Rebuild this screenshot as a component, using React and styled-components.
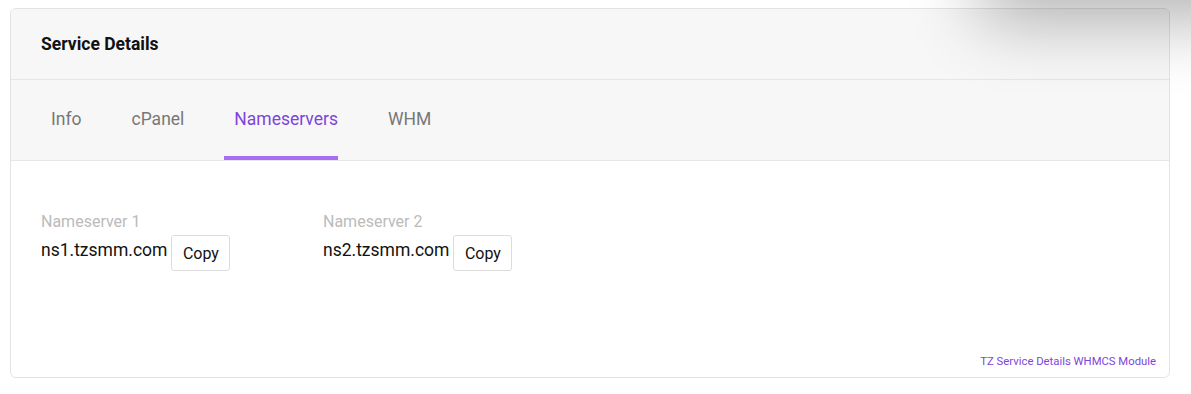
import React, { useState } from "react";
import styled, { createGlobalStyle } from "styled-components";

const GlobalStyle = createGlobalStyle`
  body {
    margin: 0;
    padding: 8px 0 0 10px;
    background: #fff;
    font-family: Roboto, "Liberation Sans", sans-serif;
    overflow: hidden;
  }
`;

const Card = styled.div`
  width: 1160px;
  box-sizing: border-box;
  border: 1px solid #e3e3e3;
  border-radius: 6px;
  background: #fff;
  overflow: hidden;
`;

const Header = styled.div`
  height: 70px;
  display: flex;
  align-items: center;
  padding-left: 30px;
  background: #f7f7f7;
  border-bottom: 1px solid #e6e6e6;
  font-size: 17.5px;
  font-weight: 700;
  color: #111;
`;

const TabBar = styled.div`
  height: 80px;
  display: flex;
  gap: 40px;
  padding-left: 30px;
  background: #f7f7f7;
  border-bottom: 1px solid #e6e6e6;
`;

const Tab = styled.button`
  position: relative;
  border: 0;
  background: none;
  padding: 0 0 2px 10px;
  font-family: inherit;
  font-size: 17.5px;
  color: ${(p) => (p.$active ? "#7e44dc" : "#777")};
  cursor: pointer;
  display: flex;
  align-items: center;

  &::after {
    content: "";
    position: absolute;
    left: 0;
    right: 0;
    bottom: 0;
    height: 4px;
    background: ${(p) => (p.$active ? "#a76ef2" : "transparent")};
  }
`;

const Body = styled.div`
  height: 216px;
  display: flex;
  flex-direction: column;
  padding: 51px 13px 9px 30px;
  box-sizing: border-box;
`;

const Servers = styled.div`
  display: grid;
  grid-template-columns: 282px 282px;
  flex: 1;
  align-content: start;
`;

const Field = styled.div`
  display: flex;
  flex-direction: column;
`;

const Label = styled.div`
  font-size: 16px;
  color: #bbb;
  line-height: 20px;
`;

const ValueRow = styled.div`
  display: flex;
  align-items: center;
  gap: 4px;
  margin-top: 3px;
`;

const Value = styled.span`
  font-size: 17.5px;
  color: #111;
  margin-top: -7px;
`;

const CopyButton = styled.button`
  height: 36px;
  width: 59px;
  padding: 0;
  border: 1px solid #dcdcdc;
  border-radius: 3px;
  background: #fff;
  font-family: inherit;
  font-size: 16px;
  color: #111;
  cursor: pointer;
`;

const Footer = styled.div`
  text-align: right;
  font-size: 11.3px;
  color: #7e44dc;
`;

const Shadow = styled.div`
  position: fixed;
  top: -70px;
  left: 1000px;
  width: 400px;
  height: 70px;
  background: #fff;
  box-shadow: 0 0 70px 20px rgba(0, 0, 0, 0.3);
  pointer-events: none;
`;

const tabs = ["Info", "cPanel", "Nameservers", "WHM"];
const servers = [
  { label: "Nameserver 1", value: "ns1.tzsmm.com" },
  { label: "Nameserver 2", value: "ns2.tzsmm.com" },
];

export default function App() {
  const [active, setActive] = useState("Nameservers");
  return (
    <>
      <GlobalStyle />
      <Card>
        <Header>Service Details</Header>
        <TabBar>
          {tabs.map((t) => (
            <Tab key={t} $active={t === active} onClick={() => setActive(t)}>
              {t}
            </Tab>
          ))}
        </TabBar>
        <Body>
          <Servers>
            {servers.map((s) => (
              <Field key={s.label}>
                <Label>{s.label}</Label>
                <ValueRow>
                  <Value>{s.value}</Value>
                  <CopyButton>Copy</CopyButton>
                </ValueRow>
              </Field>
            ))}
          </Servers>
          <Footer>TZ Service Details WHMCS Module</Footer>
        </Body>
      </Card>
      <Shadow />
    </>
  );
}
